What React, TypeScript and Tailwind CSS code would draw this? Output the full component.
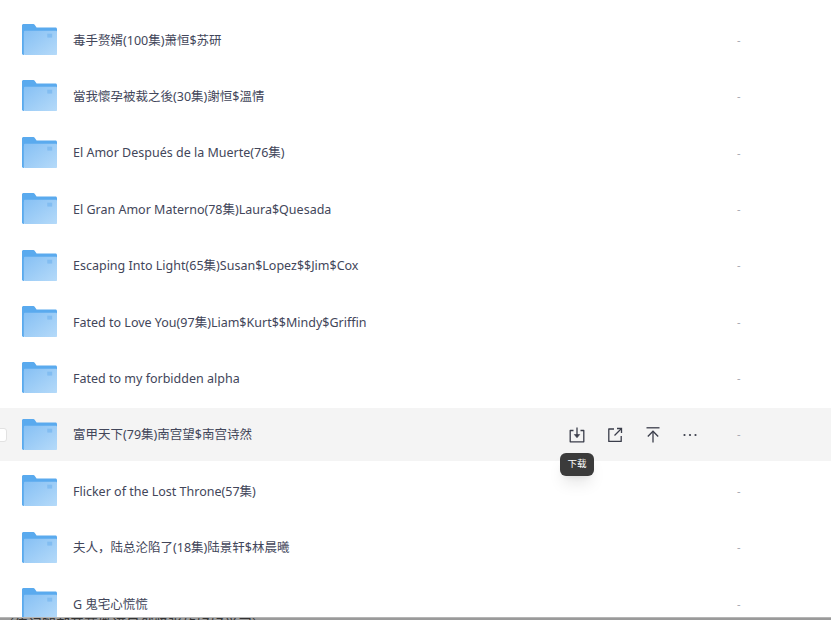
const ROWS = [
  '毒手赘婿(100集)萧恒$苏研',
  '當我懷孕被裁之後(30集)謝恒$溫情',
  'El Amor Después de la Muerte(76集)',
  'El Gran Amor Materno(78集)Laura$Quesada',
  'Escaping Into Light(65集)Susan$Lopez$$Jim$Cox',
  'Fated to Love You(97集)Liam$Kurt$$Mindy$Griffin',
  'Fated to my forbidden alpha',
  '富甲天下(79集)南宫望$南宫诗然',
  'Flicker of the Lost Throne(57集)',
  '夫人，陆总沦陷了(18集)陆景轩$林晨曦',
  'G 鬼宅心慌慌',
];

function FolderIcon() {
  return (
    <svg width="35" height="32" viewBox="0 0 36 33" preserveAspectRatio="none" className="shrink-0">
      <defs>
        <linearGradient id="folderFront" x1="0" y1="0" x2="1" y2="1">
          <stop offset="0" stopColor="#86c0f4" />
          <stop offset="1" stopColor="#b5daf9" />
        </linearGradient>
      </defs>
      <path d="M0 1.500C0 .7.7 0 1.500 0h10.200c.6 0 1 .2 1.300.7L15 3.600h19.500c.8 0 1.500.7 1.500 1.500V9H2v23H1.500C.7 32 0 31.300 0 30.500Z" fill="#5aaaee" />
      <path d="M2 8c0-.6.400-1 1-1h32c.6 0 1 .4 1 1v23c0 .6-.4 1-1 1H3c-.6 0-1-.4-1-1Z" fill="url(#folderFront)" />
      <rect x="26" y="10" width="5" height="4" fill="#6fb2ee" opacity="0.6" />
    </svg>
  );
}

function DownloadIcon() {
  return (
    <svg width="18" height="18" viewBox="0 0 18 18" fill="none" stroke="#3a3d4a" strokeWidth="1.3">
      <path d="M5.500 4.500H2.200v11.300h13.600V4.500h-3.300" strokeLinejoin="round" />
      <path d="M9 1.500v8.500" />
      <path d="M6.300 8.500 9 11.800l2.700-3.300Z" fill="#3a3d4a" strokeWidth="0.6" />
    </svg>
  );
}

function ShareIcon() {
  return (
    <svg width="18" height="18" viewBox="0 0 18 18" fill="none" stroke="#3a3d4a" strokeWidth="1.3">
      <path d="M8 3H2.800v12.400h12.400V10" strokeLinejoin="round" />
      <path d="M8.500 9.500 15 3" />
      <path d="M11 2.500h4.500V7" />
    </svg>
  );
}

function TopIcon() {
  return (
    <svg width="18" height="18" viewBox="0 0 18 18" fill="none" stroke="#3a3d4a" strokeWidth="1.3">
      <path d="M2.500 1.800h13" />
      <path d="M9 5.500v11" />
      <path d="M3.800 10.500 9 5.200l5.200 5.300" />
    </svg>
  );
}

function MoreIcon() {
  return (
    <svg width="18" height="18" viewBox="0 0 18 18" fill="#3a3d4a">
      <circle cx="3.500" cy="9" r="1.100" />
      <circle cx="9" cy="9" r="1.100" />
      <circle cx="14.500" cy="9" r="1.100" />
    </svg>
  );
}

function FileRow({ name, active }: { name: string; active: boolean }) {
  return (
    <div className={`relative flex h-[53px] shrink-0 items-center pl-[22px] ${active ? 'z-10 bg-[#f4f4f4]' : 'bg-white'}`}>
      {active && <div className="absolute left-[-7px] top-[20px] h-[14px] w-[14px] rounded-[3px] border border-[#e2e2e2] bg-white" />}
      <FolderIcon />
      <div className="ml-[16px] mt-[2px] w-[487px] truncate text-[12.500px] text-[#42465a]">{name}</div>
      {active && (
        <div className="flex items-center">
          <button className="relative ml-[-2px] flex w-[38px] justify-center"><DownloadIcon />
            <span className="absolute left-[2px] top-[27px] flex h-[23px] w-[34px] items-center justify-center rounded-md bg-[#3b3b3b] text-[9.500px] text-white shadow-lg">下载</span>
          </button>
          <button className="flex w-[38px] justify-center"><ShareIcon /></button>
          <button className="flex w-[37px] justify-center"><TopIcon /></button>
          <button className="flex w-[38px] justify-center"><MoreIcon /></button>
        </div>
      )}
      <div className="absolute left-[737px] text-[11px] text-[#a5a7b0]">-</div>
    </div>
  );
}

export default function App() {
  return (
    <div className="flex h-[620px] w-[831px] flex-col overflow-hidden bg-white font-['Noto_Sans','Noto_Sans_CJK_SC',sans-serif]">
      <div className="flex h-[617px] flex-col gap-[3.400px] overflow-hidden pt-[13.500px]">
        {ROWS.map((name, i) => (
          <FileRow key={name} name={name} active={i === 7} />
        ))}
      </div>
      <div className="h-[3px] overflow-hidden border-t border-[#b5b5b5] bg-[#9a9a9a]">
        <div className="whitespace-nowrap text-[14px] leading-[12px] text-[#333]">（传记腿部开幕撒谎虽然紧张的好好学习）</div>
      </div>
    </div>
  );
}
